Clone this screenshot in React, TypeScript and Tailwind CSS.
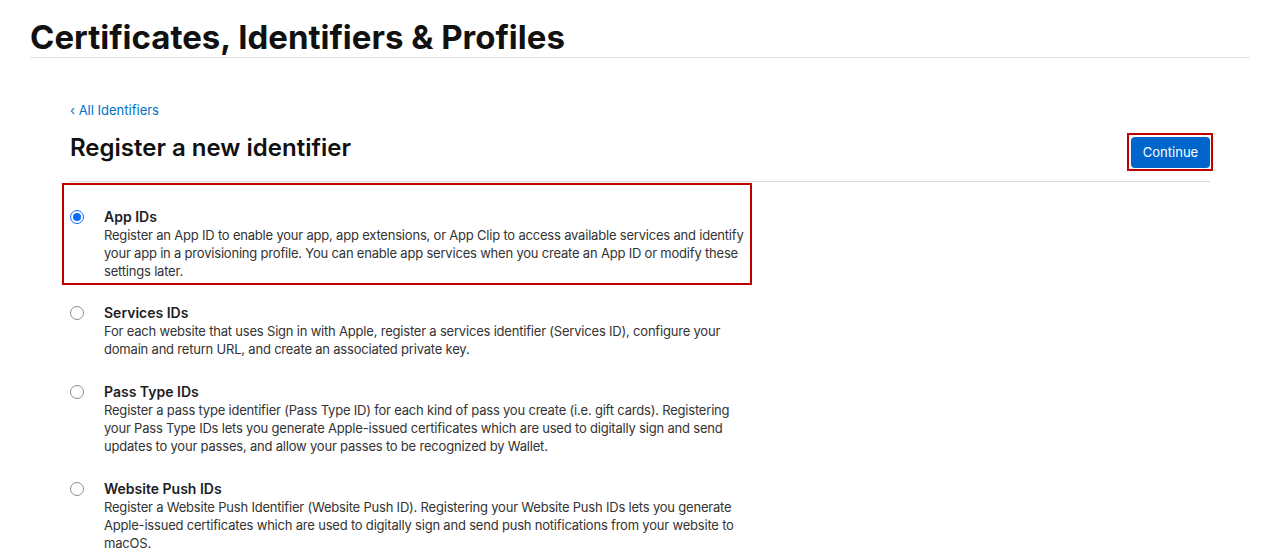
import React, { useState } from 'react';

interface IdentifierOption {
  id: string;
  title: string;
  description: string;
}

const OPTIONS: IdentifierOption[] = [
  {
    id: 'app',
    title: 'App IDs',
    description:
      'Register an App ID to enable your app, app extensions, or App Clip to access available services and identify your app in a provisioning profile. You can enable app services when you create an App ID or modify these settings later.',
  },
  {
    id: 'services',
    title: 'Services IDs',
    description:
      'For each website that uses Sign in with Apple, register a services identifier (Services ID), configure your domain and return URL, and create an associated private key.',
  },
  {
    id: 'pass',
    title: 'Pass Type IDs',
    description:
      'Register a pass type identifier (Pass Type ID) for each kind of pass you create (i.e. gift cards). Registering your Pass Type IDs lets you generate Apple-issued certificates which are used to digitally sign and send updates to your passes, and allow your passes to be recognized by Wallet.',
  },
  {
    id: 'push',
    title: 'Website Push IDs',
    description:
      'Register a Website Push Identifier (Website Push ID). Registering your Website Push IDs lets you generate Apple-issued certificates which are used to digitally sign and send push notifications from your website to macOS.',
  },
];

const Radio: React.FC<{ checked: boolean }> = ({ checked }) => (
  <span
    className={`mt-[2px] flex h-[14px] w-[14px] shrink-0 items-center justify-center rounded-full border ${
      checked ? 'border-[#0a6cff] bg-white' : 'border-[#8e8e8e] bg-white'
    }`}
  >
    {checked && <span className="h-[8px] w-[8px] rounded-full bg-[#0a6cff]" />}
  </span>
);

const App: React.FC = () => {
  const [selected, setSelected] = useState('app');

  return (
    <div className="min-h-screen bg-white font-['Inter','Liberation_Sans',sans-serif] text-[#1d1d1f]">
      <div className="px-[30px] pr-[20px]">
        <h1 className="pt-[18px] text-[33px] font-bold leading-[38px] text-[#111]">
          Certificates, Identifiers &amp; Profiles
        </h1>
        <div className="mt-[1px] h-px bg-[#e0e0e0]" />
      </div>

      <div className="px-[70px] pr-[60px]">
        <a className="mt-[43px] block text-[13px] leading-[18px] text-[#0070c9]" href="#">
          ‹ All Identifiers
        </a>

        <div className="mt-[14px] flex items-start justify-between">
          <h2 className="text-[24px] font-semibold leading-[30px] text-[#111]">
            Register a new identifier
          </h2>
          <div className="-mr-[3px] border-2 border-[#c00000] pb-[1px] pl-[2px] pr-[1px] pt-[2px]">
            <button className="h-[31px] w-[79px] rounded-[4px] bg-[#0066cc] text-[13px] text-white">
              Continue
            </button>
          </div>
        </div>

        <div className="mt-[10px] h-px bg-[#d6d6d6]" />

        <div className="-ml-[8px] mt-px flex w-[690px] flex-col">
          {OPTIONS.map((o, i) => (
            <label
              key={o.id}
              onClick={() => setSelected(o.id)}
              className={`flex cursor-pointer gap-[20px] ${
                i === 0
                  ? 'border-2 border-[#c00000] pb-[3px] pl-[6px] pr-[4px] pt-[23px]'
                  : i === 1
                    ? 'mt-[19px] pl-[8px]'
                    : 'mt-[25px] pl-[8px]'
              }`}
            >
              <Radio checked={selected === o.id} />
              <div className="w-[648px]">
                <div className="text-[14px] font-semibold leading-[18px] text-[#1d1d1f]">{o.title}</div>
                <p className="text-[13px] leading-[18px] tracking-[-0.2px] text-[#333]">{o.description}</p>
              </div>
            </label>
          ))}
        </div>
      </div>
    </div>
  );
};

export default App;
